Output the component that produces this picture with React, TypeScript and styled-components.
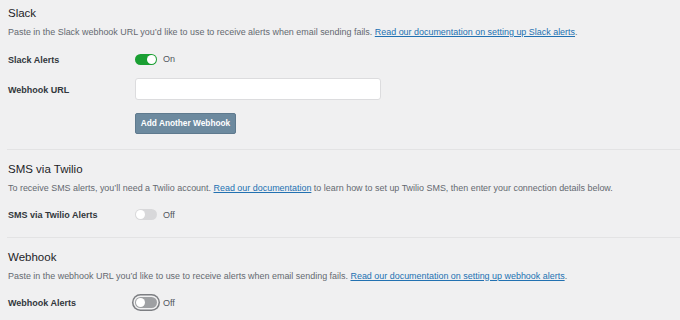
import React from "react";
import styled, { createGlobalStyle, css } from "styled-components";

const Global = createGlobalStyle`
  html, body { margin: 0; padding: 0; background: #f0f0f1; }
  body { font-family: "Liberation Sans", Arial, sans-serif; -webkit-font-smoothing: antialiased; }
`;

const Page = styled.div`
  width: 680px;
  height: 320px;
  overflow: hidden;
  background: #f0f0f1;
  padding: 0 0 0 7px;
  box-sizing: border-box;
`;

const Section = styled.section<{ $first?: boolean; $last?: boolean; $pb?: number }>`
  padding: ${(p) => (p.$first ? "5px" : "11px")} 0 ${(p) => (p.$last ? 0 : p.$pb ?? 8)}px 1px;
  border-bottom: ${(p) => (p.$last ? "none" : "1px solid #e3e3e4")};
`;

const Heading = styled.h2`
  margin: 0;
  font-size: 11.5px;
  line-height: 16px;
  font-weight: 400;
  color: #1d2327;
`;

const Desc = styled.p`
  margin: 4px 0 5px;
  font-size: 8.95px;
  line-height: 14px;
  color: #646970;
`;

const DocLink = styled.a`
  color: #2271b1;
  text-decoration: underline;
`;

const Row = styled.div`
  display: grid;
  grid-template-columns: 127px 1fr;
  align-items: center;
  min-height: 30px;
`;

const Label = styled.span`
  font-size: 9px;
  font-weight: 700;
  color: #32373c;
  padding-top: 1px;
`;

const ToggleWrap = styled.span`
  display: flex;
  align-items: center;
  gap: 6px;
`;

const Track = styled.span<{ $on?: boolean; $focus?: boolean }>`
  position: relative;
  width: 22px;
  height: 11px;
  border-radius: 6px;
  background: ${(p) => (p.$on ? "#1a9f33" : p.$focus ? "#9ea0a3" : "#d8d8da")};
  ${(p) =>
    p.$focus &&
    css`
      box-shadow: 0 0 0 1.5px #f0f0f1, 0 0 0 3px #7c7e82;
    `}
`;

const Knob = styled.span<{ $on?: boolean }>`
  position: absolute;
  top: 1px;
  ${(p) => (p.$on ? "right: 1px;" : "left: 1px;")}
  width: 9px;
  height: 9px;
  border-radius: 50%;
  background: #fff;
`;

const ToggleText = styled.span`
  font-size: 9px;
  color: #50575e;
`;

const Input = styled.input`
  box-sizing: border-box;
  width: 246px;
  height: 22px;
  border: 1px solid #dcdcde;
  border-radius: 3px;
  background: #fff;
  padding: 0 6px;
  margin: 0;
  font: inherit;
`;

const Button = styled.button`
  box-sizing: border-box;
  height: 21px;
  width: 101px;
  padding: 0;
  border: 1px solid #5f7a8e;
  border-radius: 2px;
  background: #6d8a9f;
  color: #fff;
  font-family: "Liberation Sans", Arial, sans-serif;
  font-size: 8.3px;
  font-weight: 700;
`;

const ButtonRow = styled.div`
  display: grid;
  grid-template-columns: 127px 1fr;
  padding-top: 8px;
`;

function Toggle({ on, focus }: { on?: boolean; focus?: boolean }) {
  return (
    <ToggleWrap>
      <Track $on={on} $focus={focus}>
        <Knob $on={on} />
      </Track>
      <ToggleText>{on ? "On" : "Off"}</ToggleText>
    </ToggleWrap>
  );
}

export default function App() {
  return (
    <Page>
      <Global />
      <Section $first $pb={15}>
        <Heading>Slack</Heading>
        <Desc>
          Paste in the Slack webhook URL you’d like to use to receive alerts when email sending fails.{" "}
          <DocLink href="#">Read our documentation on setting up Slack alerts</DocLink>.
        </Desc>
        <Row>
          <Label>Slack Alerts</Label>
          <Toggle on />
        </Row>
        <Row>
          <Label>Webhook URL</Label>
          <Input type="text" />
        </Row>
        <ButtonRow>
          <span />
          <span>
            <Button>Add Another Webhook</Button>
          </span>
        </ButtonRow>
      </Section>
      <Section $pb={7}>
        <Heading>SMS via Twilio</Heading>
        <Desc>
          To receive SMS alerts, you’ll need a Twilio account. <DocLink href="#">Read our documentation</DocLink> to
          learn how to set up Twilio SMS, then enter your connection details below.
        </Desc>
        <Row>
          <Label>SMS via Twilio Alerts</Label>
          <Toggle />
        </Row>
      </Section>
      <Section $last>
        <Heading>Webhook</Heading>
        <Desc>
          Paste in the webhook URL you’d like to use to receive alerts when email sending fails.{" "}
          <DocLink href="#">Read our documentation on setting up webhook alerts</DocLink>.
        </Desc>
        <Row>
          <Label>Webhook Alerts</Label>
          <Toggle focus />
        </Row>
      </Section>
    </Page>
  );
}
